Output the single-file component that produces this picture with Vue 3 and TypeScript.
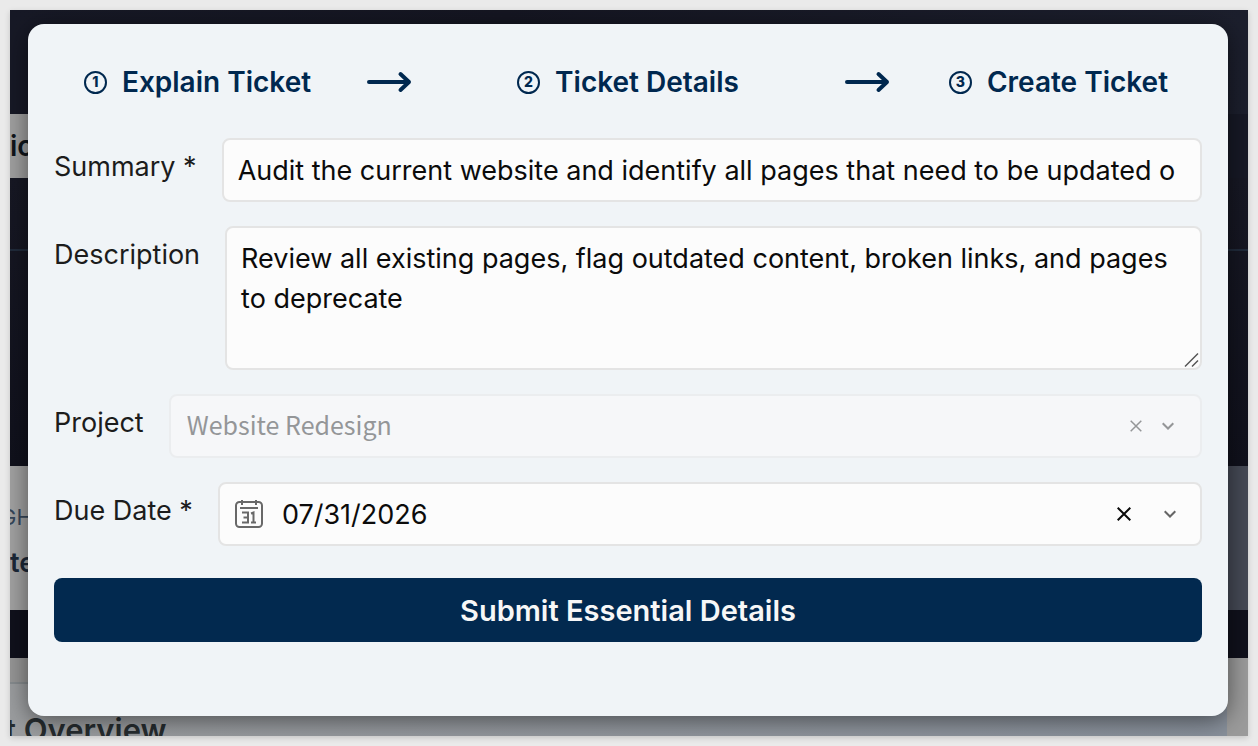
<script setup lang="ts">
import { ref } from 'vue'

interface Step {
  id: number
  title: string
}

const steps: Step[] = [
  { id: 1, title: 'Explain Ticket' },
  { id: 2, title: 'Ticket Details' },
  { id: 3, title: 'Create Ticket' },
]

const summary = ref('Audit the current website and identify all pages that need to be updated o')
const description = ref('Review all existing pages, flag outdated content, broken links, and pages to deprecate')
const project = ref('Website Redesign')
const dueDate = ref('07/31/2026')
</script>

<template>
  <div class="frame">
    <div class="stage">
      <div class="backdrop" aria-hidden="true">
        <div class="band top"></div>
        <div class="band tab"><span>ic</span></div>
        <div class="band hero"><div class="rule"></div></div>
        <div class="band stats">
          <div class="stats-left">
            <span class="small">GH</span>
            <span class="medium">te</span>
          </div>
          <div class="stats-right"></div>
        </div>
        <div class="band divider"></div>
        <div class="band overview">
          <div class="overview-main"><strong>t Overview</strong></div>
          <div class="overview-side"></div>
        </div>
      </div>

      <main class="modal">
        <ol class="steps">
          <template v-for="step in steps" :key="step.id">
            <li class="step">
              <span class="badge">{{ step.id }}</span>
              <span>{{ step.title }}</span>
            </li>
            <li v-if="step.id < steps.length" class="arrow" :class="{ late: step.id === 2 }" aria-hidden="true">
              <svg width="46" height="22" viewBox="0 0 46 22">
                <path d="M3 11H43M34.500 3L43 11L34.500 19" />
              </svg>
            </li>
          </template>
        </ol>

        <form class="form" @submit.prevent>
          <div class="row">
            <label for="summary">Summary *</label>
            <input id="summary" v-model="summary" class="box" type="text" />
          </div>

          <div class="row">
            <label for="description">Description</label>
            <div class="area">
              <textarea id="description" v-model="description" class="box" rows="3"></textarea>
              <svg class="grip" width="16" height="16" viewBox="0 0 16 16">
                <path d="M1 14.500L14 1.500M8 14.500L14 8.500" />
              </svg>
            </div>
          </div>

          <div class="row">
            <label for="project">Project</label>
            <div class="box control disabled">
              <select id="project" v-model="project" disabled>
                <option>Website Redesign</option>
              </select>
              <button type="button" class="icon" aria-label="Clear project" disabled>
                <svg width="12" height="12" viewBox="0 0 12 12"><path d="M.7.7L11.300 11.300M11.300.7L.7 11.300" /></svg>
              </button>
              <svg class="chevron" width="12" height="8" viewBox="0 0 12 8"><path d="M.7 1.200L6 6.500L11.300 1.200" /></svg>
            </div>
          </div>

          <div class="row">
            <label for="due">Due Date *</label>
            <div class="box control date">
              <svg class="calendar" width="30" height="30" viewBox="0 0 30 30">
                <rect x="2" y="3" width="26" height="25" rx="3.500" />
                <path d="M8 1V6M22 1V6M6 9H24" />
                <path d="M8 13.500H14V23.500H8M9.500 18.500H14M17 14.500L19.500 13.500V23.500M17 23.500H22" />
              </svg>
              <input id="due" v-model="dueDate" type="text" />
              <button type="button" class="icon" aria-label="Clear due date">
                <svg width="14" height="14" viewBox="0 0 14 14"><path d="M.7.7L13.300 13.300M13.300.7L.7 13.300" /></svg>
              </button>
              <svg class="chevron" width="12" height="8" viewBox="0 0 12 8"><path d="M.7 1.200L6 6.500L11.300 1.200" /></svg>
            </div>
          </div>

          <button type="submit" class="submit">Submit Essential Details</button>
        </form>
      </main>
    </div>
  </div>
</template>

<style>
body {
  margin: 0;
  background: #eaeaea;
}
</style>

<style scoped>
.frame {
  box-sizing: border-box;
  height: 100vh;
  min-height: 740px;
  padding: 10px;
  font-family: Inter, "Liberation Sans", sans-serif;
  font-size: 27px;
}

.stage {
  display: grid;
  height: 100%;
  overflow: hidden;
  background: #969696;
  box-shadow: 0 2px 6px rgba(0, 0, 0, 0.16);
}

.backdrop,
.modal {
  grid-area: 1 / 1;
  min-width: 0;
}

.backdrop {
  display: flex;
  flex-direction: column;
  min-height: 0;
  overflow: hidden;
}

.band {
  display: flex;
  flex: none;
}

.top {
  height: 104px;
  background: linear-gradient(90deg, #171926, #151622 40%, #1c1f2d);
}

.tab {
  align-items: center;
  height: 64px;
  background: linear-gradient(90deg, #a0a0a0 60px, #171926 60px);
  color: #10151b;
  font-size: 28px;
  font-weight: 600;
}

.hero {
  align-items: flex-start;
  height: 288px;
  background: linear-gradient(#171824, #10111c);
}

.rule {
  flex: 1;
  height: 2px;
  margin-top: 71px;
  background: #202b3b;
}

.stats {
  height: 144px;
}

.stats-left {
  display: flex;
  flex: 1;
  flex-direction: column;
  gap: 12px;
  padding-top: 34px;
  background: #a2a2a2;
  color: #1b2838;
}

.small {
  margin-left: -10px;
  color: #36465a;
  font-size: 22px;
  line-height: 34px;
}

.medium {
  font-size: 27px;
  font-weight: 600;
  line-height: 34px;
}

.stats-right {
  width: 40px;
  background: #454955;
}

.divider {
  height: 48px;
  background: #10111c;
}

.overview {
  height: 78px;
}

.overview-main {
  flex: 1;
  margin-top: 24px;
  padding-top: 26px;
  border-top: 2px solid #868b8e;
  background: linear-gradient(90deg, #9b9d9f, #88909b);
  color: #262c2f;
  font-size: 31px;
  line-height: 40px;
  white-space: nowrap;
}

.overview-main strong {
  margin-left: -5px;
  font-weight: 600;
}

.overview-side {
  width: 21px;
  background: #9b9b9b;
}

.modal {
  z-index: 1;
  box-sizing: border-box;
  margin: 14px 20px 20px 18px;
  padding: 40px 26px;
  border-radius: 16px;
  background: #f0f4f7;
  box-shadow: 0 4px 24px rgba(0, 0, 0, 0.5);
}

.steps {
  display: grid;
  grid-template-columns: 2fr 1fr 2fr 1fr 2fr;
  margin: 0 0 38px;
  padding: 0;
  color: #00284f;
  font-size: 28px;
  font-weight: 600;
  line-height: 36px;
  list-style: none;
}

.step {
  display: flex;
  align-items: center;
  justify-content: center;
  gap: 15px;
  white-space: nowrap;
}

.badge {
  display: grid;
  place-items: center;
  box-sizing: border-box;
  width: 23px;
  height: 23px;
  border: 2px solid currentColor;
  border-radius: 50%;
  font-size: 14px;
  font-weight: 800;
  line-height: 18px;
}

.arrow {
  display: flex;
  align-items: center;
  padding: 0 25px;
}

.late {
  justify-content: flex-end;
}

svg {
  display: block;
  flex: none;
  fill: none;
  stroke: currentColor;
}

.arrow svg {
  stroke-width: 4;
  stroke-linecap: round;
  stroke-linejoin: round;
}

.form {
  display: flex;
  flex-direction: column;
  gap: 24px;
}

.row {
  display: flex;
  align-items: flex-start;
  gap: 25px;
}

label {
  flex: none;
  padding-top: 11px;
  color: #1c1c1c;
  line-height: 36px;
}

input,
select,
textarea,
button {
  margin: 0;
  font: inherit;
}

.box {
  box-sizing: border-box;
  flex: 1;
  min-width: 0;
  height: 64px;
  padding: 0 14px;
  border: 2px solid #e4e4e4;
  border-radius: 8px;
  outline: none;
  background: #fcfcfc;
  color: #0b0b0b;
}

.area {
  position: relative;
  display: flex;
  flex: 1;
  min-width: 0;
}

textarea.box {
  height: 144px;
  padding: 11px 14px;
  line-height: 40px;
  resize: none;
  overflow: hidden;
}

.grip {
  position: absolute;
  right: 2px;
  bottom: 2px;
  color: #555;
  stroke-width: 1.5;
}

.control {
  display: flex;
  align-items: center;
}

.control input,
.control select {
  flex: 1;
  min-width: 0;
  padding: 0;
  border: 0;
  outline: none;
  background: transparent;
  color: inherit;
  appearance: none;
}

.control select {
  height: 44px;
  padding-bottom: 4px;
  font-family: "Noto Sans CJK SC", "Noto Sans", sans-serif;
  font-size: 25px;
  opacity: 1;
}

.disabled {
  padding-right: 26px;
  padding-left: 16px;
  border-color: #ebedef;
  background: #f6f7f9;
  color: #949698;
}

.disabled .icon {
  margin-right: 20px;
}

.date {
  padding-right: 24px;
}

.icon {
  padding: 0;
  border: 0;
  background: none;
  color: inherit;
}

.icon svg {
  stroke-width: 1.5;
}

.date .icon {
  margin-right: 33px;
}

.date .icon svg {
  stroke-width: 2;
}

.chevron {
  stroke-width: 2;
}

.date .chevron {
  color: #666;
}

.calendar {
  margin-right: 18px;
  color: #686868;
  stroke-width: 2;
}

.submit {
  height: 64px;
  margin-top: 8px;
  border: 0;
  border-radius: 8px;
  background: #02294f;
  color: #f7f7f7;
  font-size: 29px;
  font-weight: 600;
}
</style>
